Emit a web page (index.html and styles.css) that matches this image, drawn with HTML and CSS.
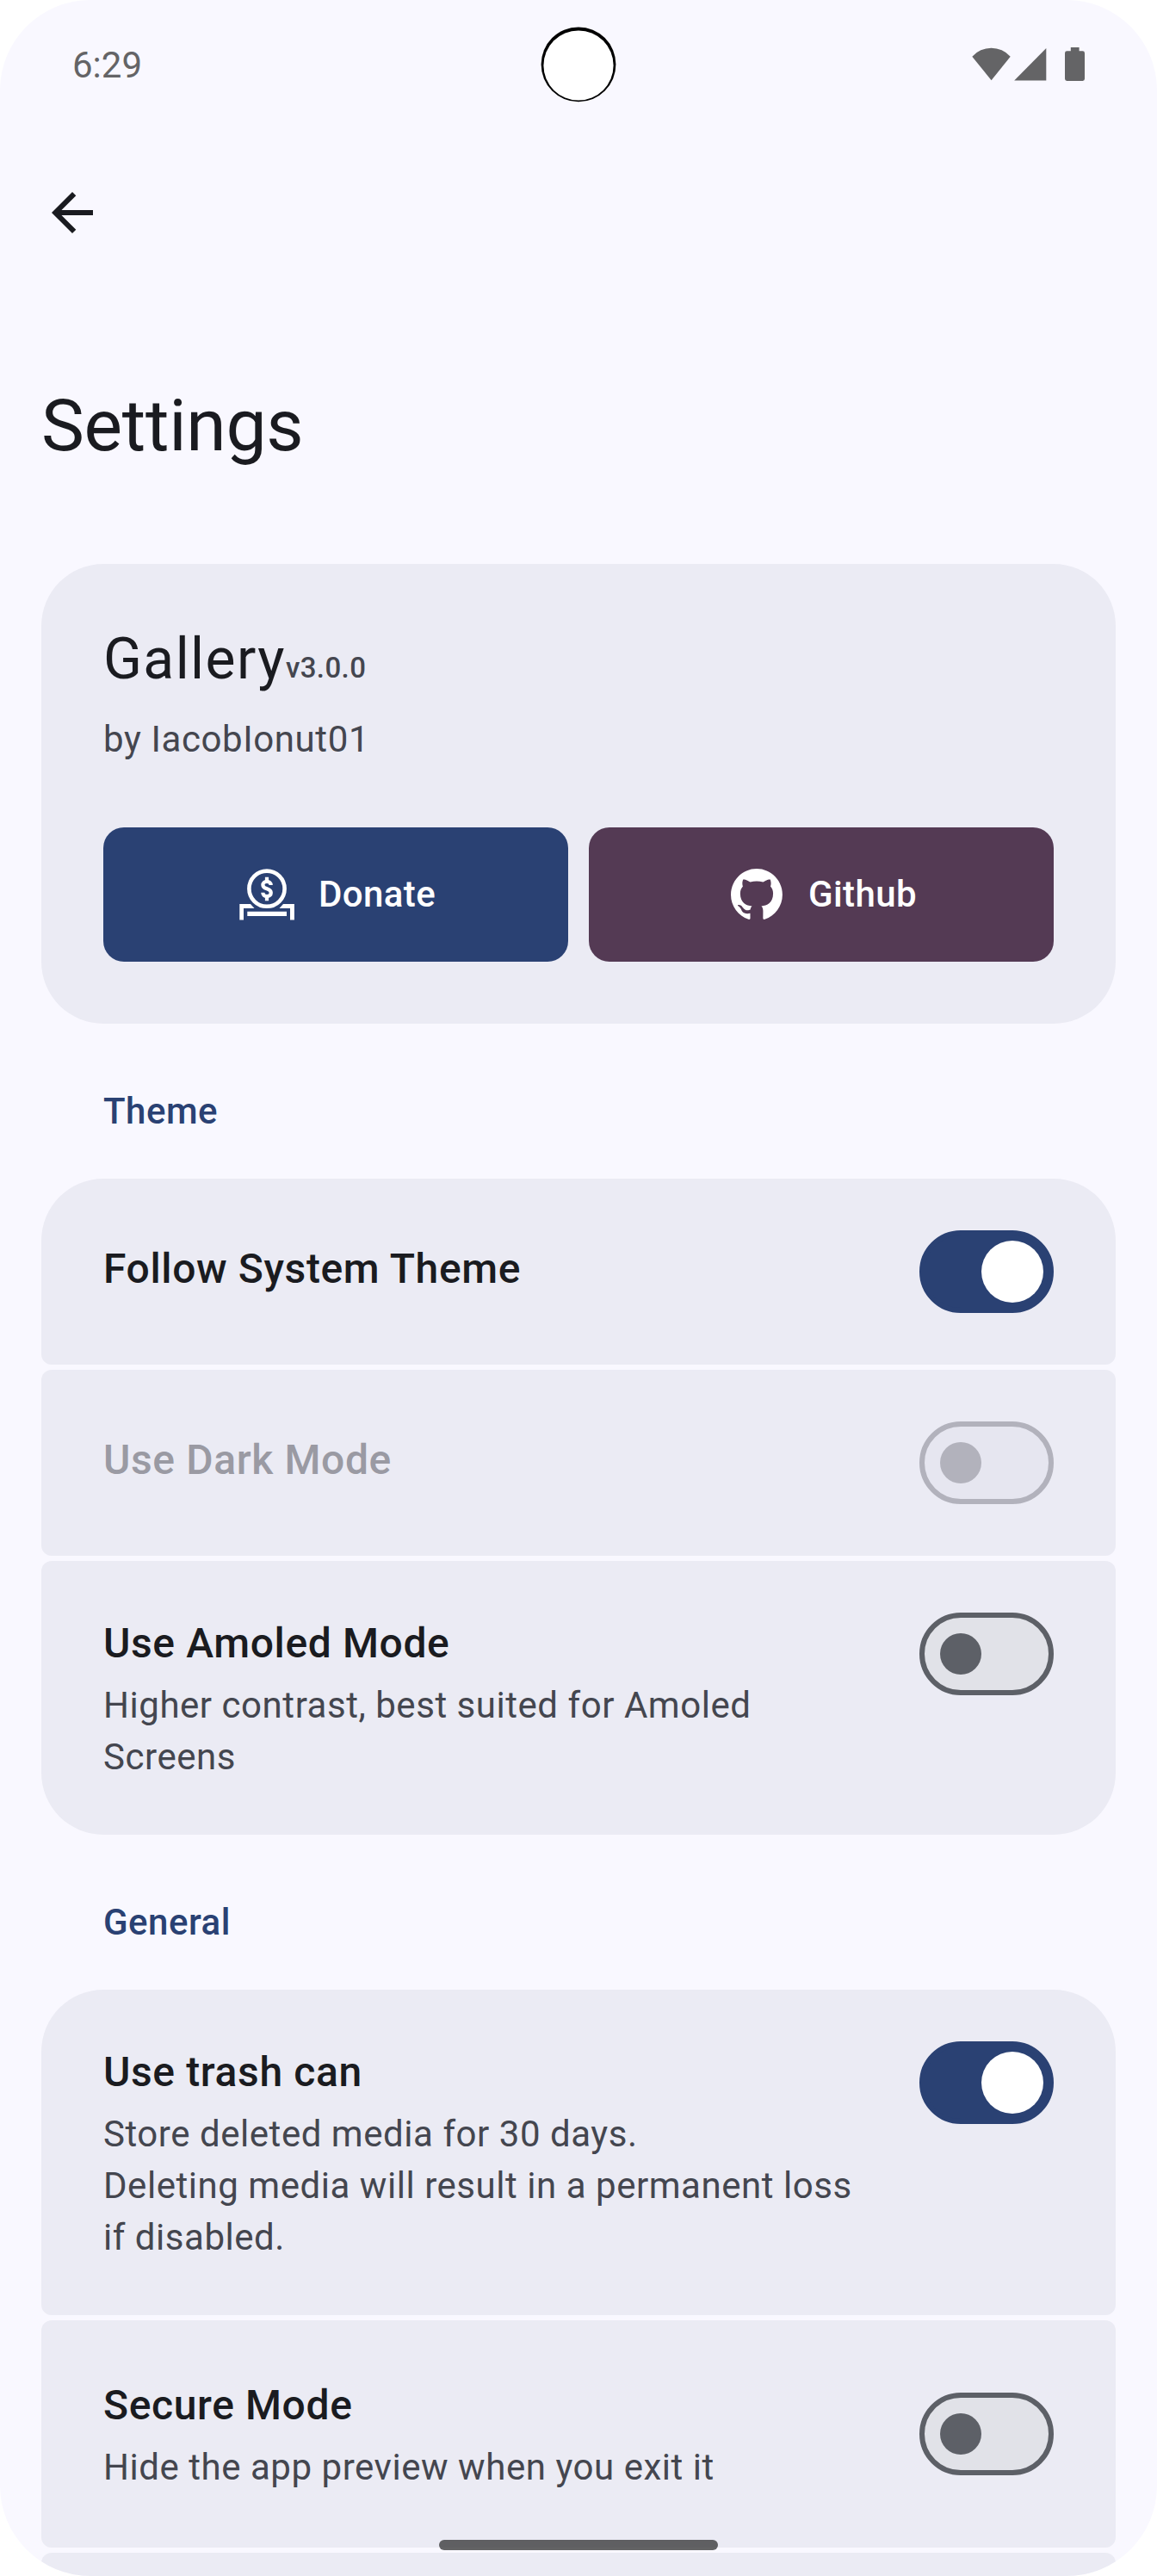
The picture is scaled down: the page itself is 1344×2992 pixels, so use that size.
FILE: index.html
```html
<!DOCTYPE html>
<html lang="en">
<head>
<meta charset="utf-8">
<title>Settings</title>
<link rel="stylesheet" href="styles.css">
</head>
<body>
<div class="screen">
  <header class="status-bar">
    <span class="clock">6:29</span>
    <svg class="status-icons" viewBox="0 0 136 48" fill="currentColor" aria-hidden="true">
      <path d="M5.3 17.7A29.6 29.6 0 0 1 49.7 17.7L27.6 45.3z"/>
      <path d="M91.3 8V45.4H54.2z"/>
      <path d="M119.8 7h9.8v4.3h4a2.4 2.4 0 0 1 2.4 2.4v29.9a2.4 2.4 0 0 1-2.4 2.4h-18.2a2.4 2.4 0 0 1-2.4-2.4v-29.9a2.4 2.4 0 0 1 2.4-2.4h4.4z"/>
    </svg>
  </header>
  <svg class="camera" viewBox="0 0 88 88" aria-hidden="true">
    <circle cx="44" cy="43.8" r="43.4" fill="#000"/>
    <circle cx="44" cy="45" r="40.6" fill="#fff"/>
  </svg>

  <nav class="top-bar">
    <svg class="back" viewBox="0 0 24 24" fill="currentColor" aria-hidden="true"><path d="M7.825 13l5.6 5.6L12 20l-8-8 8-8 1.425 1.4-5.6 5.6H20v2z"/></svg>
  </nav>
  <h1 class="page-title">Settings</h1>

  <main class="content">
    <section class="about">
      <div class="app-name">Gallery<span class="version">v3.0.0</span></div>
      <div class="author">by IacobIonut01</div>
      <div class="actions">
        <div class="button donate">
          <svg class="button-icon" viewBox="0 0 72 72" fill="none" stroke="currentColor" stroke-width="4.4" aria-hidden="true">
            <circle cx="36" cy="29.2" r="20.6" stroke-width="4.6"/>
            <path d="M40.7 25.1C40.7 22.5 38.8 20.8 36 20.8S31.4 22.6 31.4 24.9C31.4 30.6 40.8 28.1 40.8 33.9 40.8 36.4 38.8 38.1 36 38.1S31.3 36.4 31.3 33.8M36 15.7V21M36 38V43.2" stroke-width="4.2"/>
            <g fill="currentColor" stroke="none">
              <path d="M4.3 47H17L21.5 52H9V65.4H4.3zM67.9 47H55L50.5 52H63V65.4H67.9z"/>
              <path d="M13.3 55.8H59V60.9H13.3z"/>
            </g>
          </svg>
          <span>Donate</span>
        </div>
        <div class="button github">
          <svg class="button-icon" viewBox="-9.8 -9.8 117.4 117.4" fill="currentColor" aria-hidden="true"><path d="M48.854 0C21.839 0 0 22 0 49.217c0 21.756 13.993 40.172 33.405 46.69 2.427.49 3.316-1.059 3.316-2.362 0-1.141-.08-5.052-.08-9.127-13.59 2.934-16.42-5.867-16.42-5.867-2.184-5.704-5.42-7.17-5.42-7.17-4.448-3.015.324-3.015.324-3.015 4.934.326 7.523 5.052 7.523 5.052 4.367 7.496 11.404 5.378 14.235 4.074.404-3.178 1.699-5.378 3.074-6.6-10.839-1.141-22.243-5.378-22.243-24.283 0-5.378 1.94-9.778 5.014-13.2-.485-1.222-2.184-6.275.486-13.038 0 0 4.125-1.304 13.426 5.052a46.97 46.97 0 0 1 12.214-1.63c4.125 0 8.33.571 12.213 1.63 9.302-6.356 13.427-5.052 13.427-5.052 2.67 6.763.97 11.816.485 13.038 3.155 3.422 5.015 7.822 5.015 13.2 0 18.905-11.404 23.06-22.324 24.283 1.78 1.548 3.316 4.481 3.316 9.126 0 6.6-.08 11.897-.08 13.526 0 1.304.89 2.853 3.316 2.364 19.412-6.52 33.405-24.935 33.405-46.691C97.707 22 75.788 0 48.854 0z"/></svg>
          <span>Github</span>
        </div>
      </div>
    </section>

    <h2 class="section-label">Theme</h2>
    <section class="group">
      <div class="item first">
        <div class="text"><div class="title">Follow System Theme</div></div>
        <div class="switch on"><div class="thumb"></div></div>
      </div>
      <div class="item disabled">
        <div class="text"><div class="title">Use Dark Mode</div></div>
        <div class="switch"><div class="thumb"></div></div>
      </div>
      <div class="item tall last">
        <div class="text">
          <div class="title">Use Amoled Mode</div>
          <div class="description">Higher contrast, best suited for Amoled<br>Screens</div>
        </div>
        <div class="switch"><div class="thumb"></div></div>
      </div>
    </section>

    <h2 class="section-label">General</h2>
    <section class="group">
      <div class="item tall first">
        <div class="text">
          <div class="title">Use trash can</div>
          <div class="description">Store deleted media for 30 days.<br>Deleting media will result in a permanent loss<br>if disabled.</div>
        </div>
        <div class="switch on"><div class="thumb"></div></div>
      </div>
      <div class="item two-line">
        <div class="text">
          <div class="title">Secure Mode</div>
          <div class="description">Hide the app preview when you exit it</div>
        </div>
        <div class="switch"><div class="thumb"></div></div>
      </div>
      <div class="item"></div>
    </section>
  </main>
  <div class="nav-handle"></div>
</div>
</body>
</html>
```
FILE: styles.css
```css
* {
  box-sizing: border-box;
}

html,
body {
  margin: 0;
  background: #fff;
}

body {
  height: 2992px;
  overflow: hidden;
  font-family: Roboto, sans-serif;
  color: #1a1b20;
}

.screen {
  position: relative;
  width: 1344px;
  height: 2992px;
  overflow: hidden;
  border-radius: 105px;
  background: #f9f8ff;
}

/* System status bar */
.status-bar {
  display: flex;
  justify-content: space-between;
  align-items: flex-start;
  height: 151px;
  padding: 48px 84px 0;
  color: #646466;
}

.clock {
  font-size: 42px;
  line-height: 56px;
}

.status-icons {
  width: 136px;
  height: 48px;
}

.camera {
  position: absolute;
  top: 31px;
  left: 628px;
  width: 88px;
  height: 88px;
}

/* App bar */
.top-bar {
  display: flex;
  align-items: center;
  height: 192px;
  padding-left: 48px;
}

.back {
  width: 72px;
  height: 72px;
}

.page-title {
  margin: 98px 48px 106px;
  font-size: 84px;
  font-weight: 400;
  line-height: 108px;
  letter-spacing: -0.3px;
}

.content {
  padding: 0 48px;
}

/* About card */
.about {
  padding: 73px 72px 72px;
  border-radius: 72px;
  background: #ebebf4;
}

.app-name {
  height: 76px;
  font-size: 66px;
  line-height: 76px;
  letter-spacing: 1.4px;
}

.version {
  font-size: 33px;
  font-weight: 500;
  line-height: 1;
  letter-spacing: 0.4px;
  vertical-align: 1.5px;
  color: #44464f;
}

.author {
  margin-top: 25px;
  font-size: 42px;
  line-height: 60px;
  letter-spacing: 0.6px;
  color: #44464f;
}

.actions {
  display: grid;
  grid-template-columns: 1fr 1fr;
  gap: 24px;
  margin-top: 72px;
}

.button {
  display: flex;
  align-items: center;
  justify-content: center;
  gap: 24px;
  height: 156px;
  border-radius: 24px;
  font-size: 42px;
  font-weight: 500;
  line-height: 60px;
  letter-spacing: 0.4px;
  color: #fff;
}

.button-icon {
  width: 72px;
  height: 72px;
}

.donate {
  background: #2a4173;
}

.github {
  background: #543a54;
}

/* Setting groups */
.section-label {
  margin: 72px 72px 48px;
  font-size: 42px;
  font-weight: 500;
  line-height: 60px;
  letter-spacing: 0.5px;
  color: #2a4173;
}

.group {
  display: flex;
  flex-direction: column;
  gap: 6px;
}

.item {
  display: flex;
  align-items: center;
  justify-content: space-between;
  gap: 48px;
  min-height: 216px;
  padding: 60px 72px;
  border-radius: 12px;
  background: #ebebf4;
}

.item.first {
  border-top-left-radius: 72px;
  border-top-right-radius: 72px;
}

.item.last {
  border-bottom-left-radius: 72px;
  border-bottom-right-radius: 72px;
}

.item.tall {
  align-items: flex-start;
}

.item.two-line {
  min-height: 264px;
}

.title {
  margin-bottom: 6px;
  font-size: 48px;
  font-weight: 500;
  line-height: 72px;
  letter-spacing: 0.62px;
}

.description {
  font-size: 42px;
  line-height: 60px;
  letter-spacing: 0.54px;
  color: #44464f;
}

.disabled .title {
  color: #9a9aa3;
}

/* Switch */
.switch {
  display: flex;
  flex: none;
  align-items: center;
  width: 156px;
  height: 96px;
  padding-left: 18px;
  border: 6px solid #5d6067;
  border-radius: 48px;
  background: #e1e2e8;
}

.thumb {
  width: 48px;
  height: 48px;
  border-radius: 50%;
  background: #5d6067;
}

.switch.on {
  justify-content: flex-end;
  padding: 0 6px 0 0;
  border-color: #2a4173;
  background: #2a4173;
}

.switch.on .thumb {
  width: 72px;
  height: 72px;
  background: #fff;
}

.disabled .switch {
  border-color: #b2b2bc;
  background: #e6e6f0;
}

.disabled .thumb {
  background: #b2b2bc;
}

/* Gesture handle over the content */
.nav-handle {
  position: absolute;
  top: 2950px;
  left: 510px;
  width: 324px;
  height: 12px;
  border-radius: 6px;
  background: rgba(25, 25, 25, 0.67);
}
```
